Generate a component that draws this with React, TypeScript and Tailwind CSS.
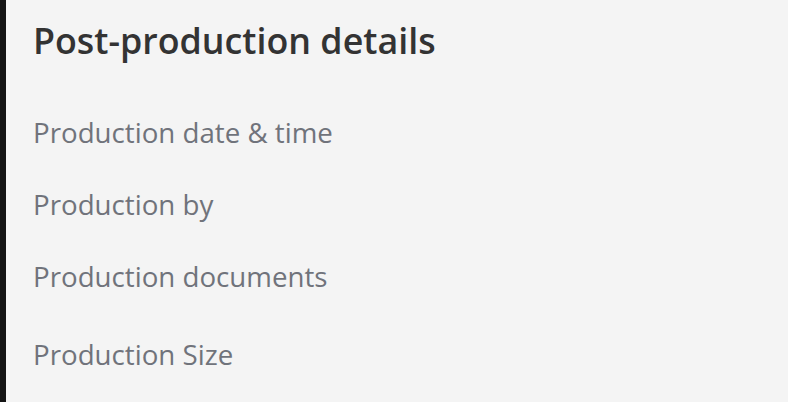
import React from 'react';

const rows = ['Production date & time', 'Production by', 'Production documents', 'Production Size'];

const App: React.FC = () => {
  return (
    <div className="flex h-[402px] w-[788px] bg-[#141414]" style={{ fontFamily: '"Open Sans", sans-serif' }}>
      <div className="ml-[6px] flex-1 bg-[#f4f4f4] pl-[27px] pt-[20px]">
        <h2 className="text-[35.8px] font-semibold leading-[40px] text-[#333333]">Post-production details</h2>
        <div className="mt-[54px] flex flex-col">
          {rows.map((r, i) => (
            <div
              key={r}
              className={`text-[27.7px] leading-[36px] text-[#70737b] ${i === 0 ? '' : i === 3 ? 'mt-[42px]' : 'mt-[36px]'}`}
            >
              {r}
            </div>
          ))}
        </div>
      </div>
    </div>
  );
};

export default App;
